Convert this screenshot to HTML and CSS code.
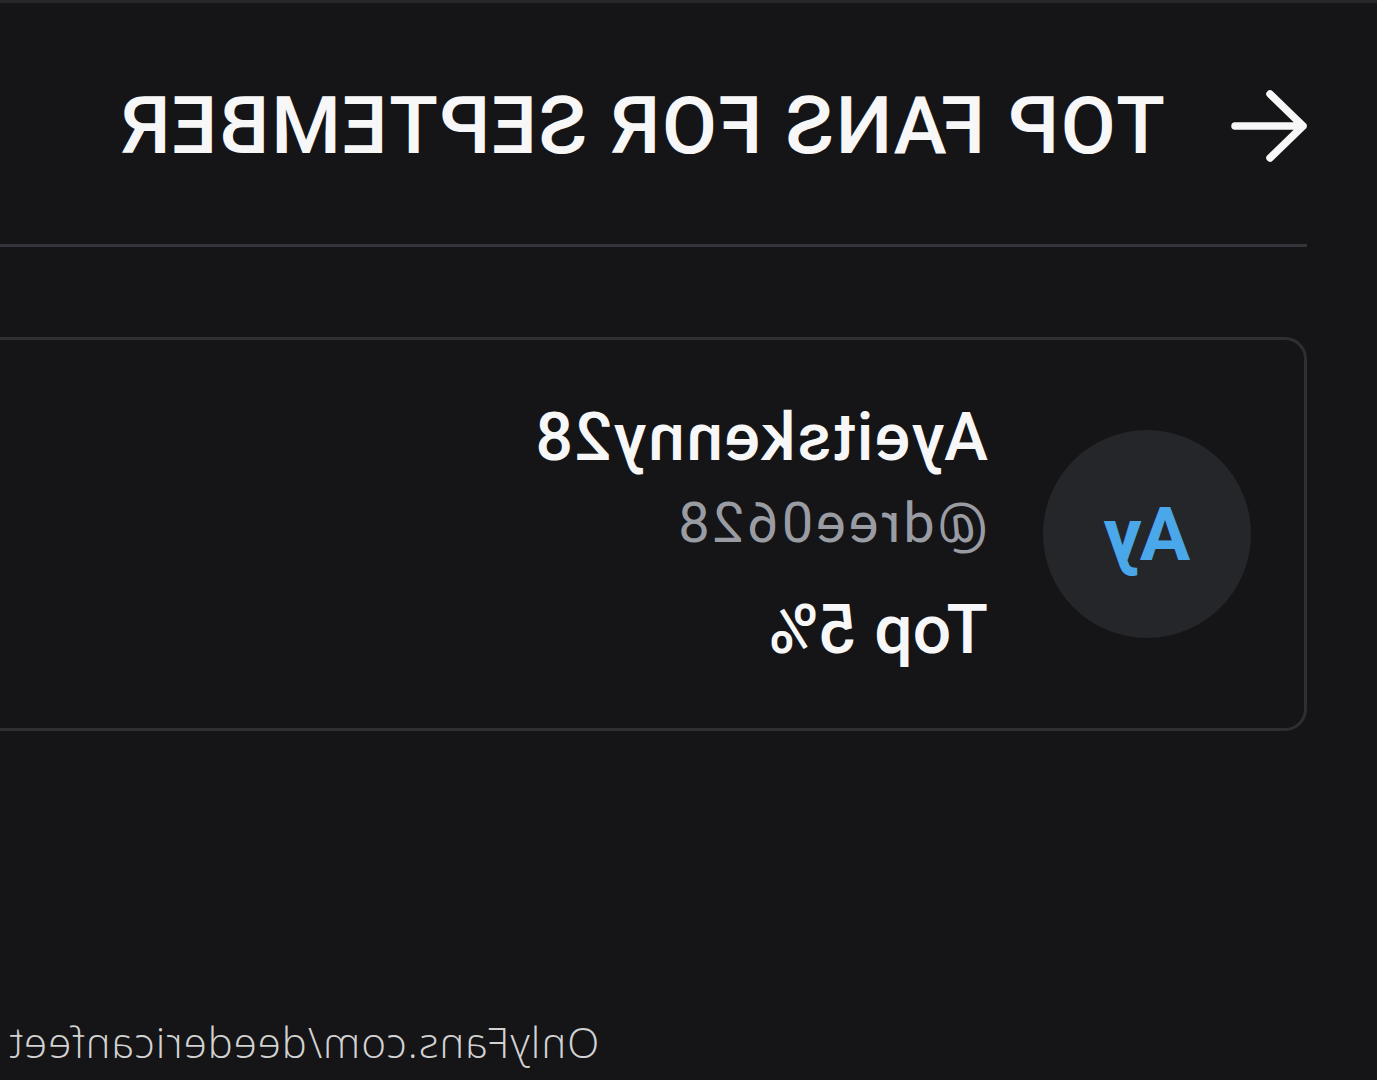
FILE: index.html
```html
<!DOCTYPE html>
<html lang="en">
<head>
    <meta charset="UTF-8">
    <meta name="viewport" content="width=device-width, initial-scale=1.0">
    <title>Top Fans</title>
    <link rel="stylesheet" href="styles.css">
</head>
<body>
    <div class="page">
        <header class="top-bar">
            <svg class="back-arrow" width="76" height="72" viewBox="0 0 76 72">
                <path d="M72 36 H4 M37 4 L4 36 L37 68" fill="none" stroke="#f7f7f8" stroke-width="7.5" stroke-linecap="round" stroke-linejoin="round"/>
            </svg>
            <h1 class="title">TOP FANS FOR SEPTEMBER</h1>
        </header>

        <div class="divider"></div>

        <section class="fan-card">
            <div class="avatar">Ay</div>
            <div class="fan-info">
                <div class="fan-name">Ayeitskenny28</div>
                <div class="fan-handle">@dree0628</div>
                <div class="fan-rank">Top 5%</div>
            </div>
        </section>

        <div class="watermark">OnlyFans.com/deedericanfeet</div>
    </div>
</body>
</html>
```

FILE: styles.css
```css
/* Общие стили */
body {
    margin: 0;
    background: #151518;
    font-family: Roboto, "Liberation Sans", sans-serif;
    color: #f7f7f8;
    overflow: hidden;
}

/* Скриншот зеркальный */
.page {
    position: relative;
    width: 1377px;
    height: 1080px;
    box-sizing: border-box;
    border-top: 3px solid #26272b;
    transform: scaleX(-1);
    overflow: hidden;
}

.top-bar {
    display: flex;
    align-items: center;
    height: 130px;
    margin-top: 58px;
    padding-left: 70px;
}

.back-arrow {
    flex: none;
}

.title {
    margin: 0 0 0 66px;
    font-size: 80px;
    font-weight: 500;
    line-height: 1;
    letter-spacing: 1.5px;
    white-space: nowrap;
}

.divider {
    height: 3px;
    margin: 53px 0 0 70px;
    background: #34353a;
}

.fan-card {
    display: flex;
    align-items: center;
    gap: 55px;
    height: 394px;
    box-sizing: border-box;
    margin: 90px -40px 0 70px;
    padding-left: 53px;
    border: 3px solid #2e2f33;
    border-radius: 22px;
}

.avatar {
    flex: none;
    width: 208px;
    height: 208px;
    border-radius: 50%;
    background: #25262a;
    color: #4aa8ea;
    font-size: 75px;
    font-weight: 700;
    display: flex;
    align-items: center;
    justify-content: center;
}

.fan-name {
    font-size: 66px;
    font-weight: 500;
    line-height: 80px;
    letter-spacing: 1.7px;
}

.fan-handle {
    font-size: 56px;
    line-height: 80px;
    padding-top: 5px;
    letter-spacing: 3px;
    color: #9a9ca3;
}

.fan-rank {
    margin-top: 27px;
    font-size: 68px;
    font-weight: 500;
    line-height: 80px;
}

.watermark {
    position: absolute;
    right: 8px;
    bottom: 10px;
    font-family: "Open Sans", sans-serif;
    font-weight: 300;
    font-size: 42px;
    letter-spacing: 1px;
    color: #d2d2d2;
}
```
